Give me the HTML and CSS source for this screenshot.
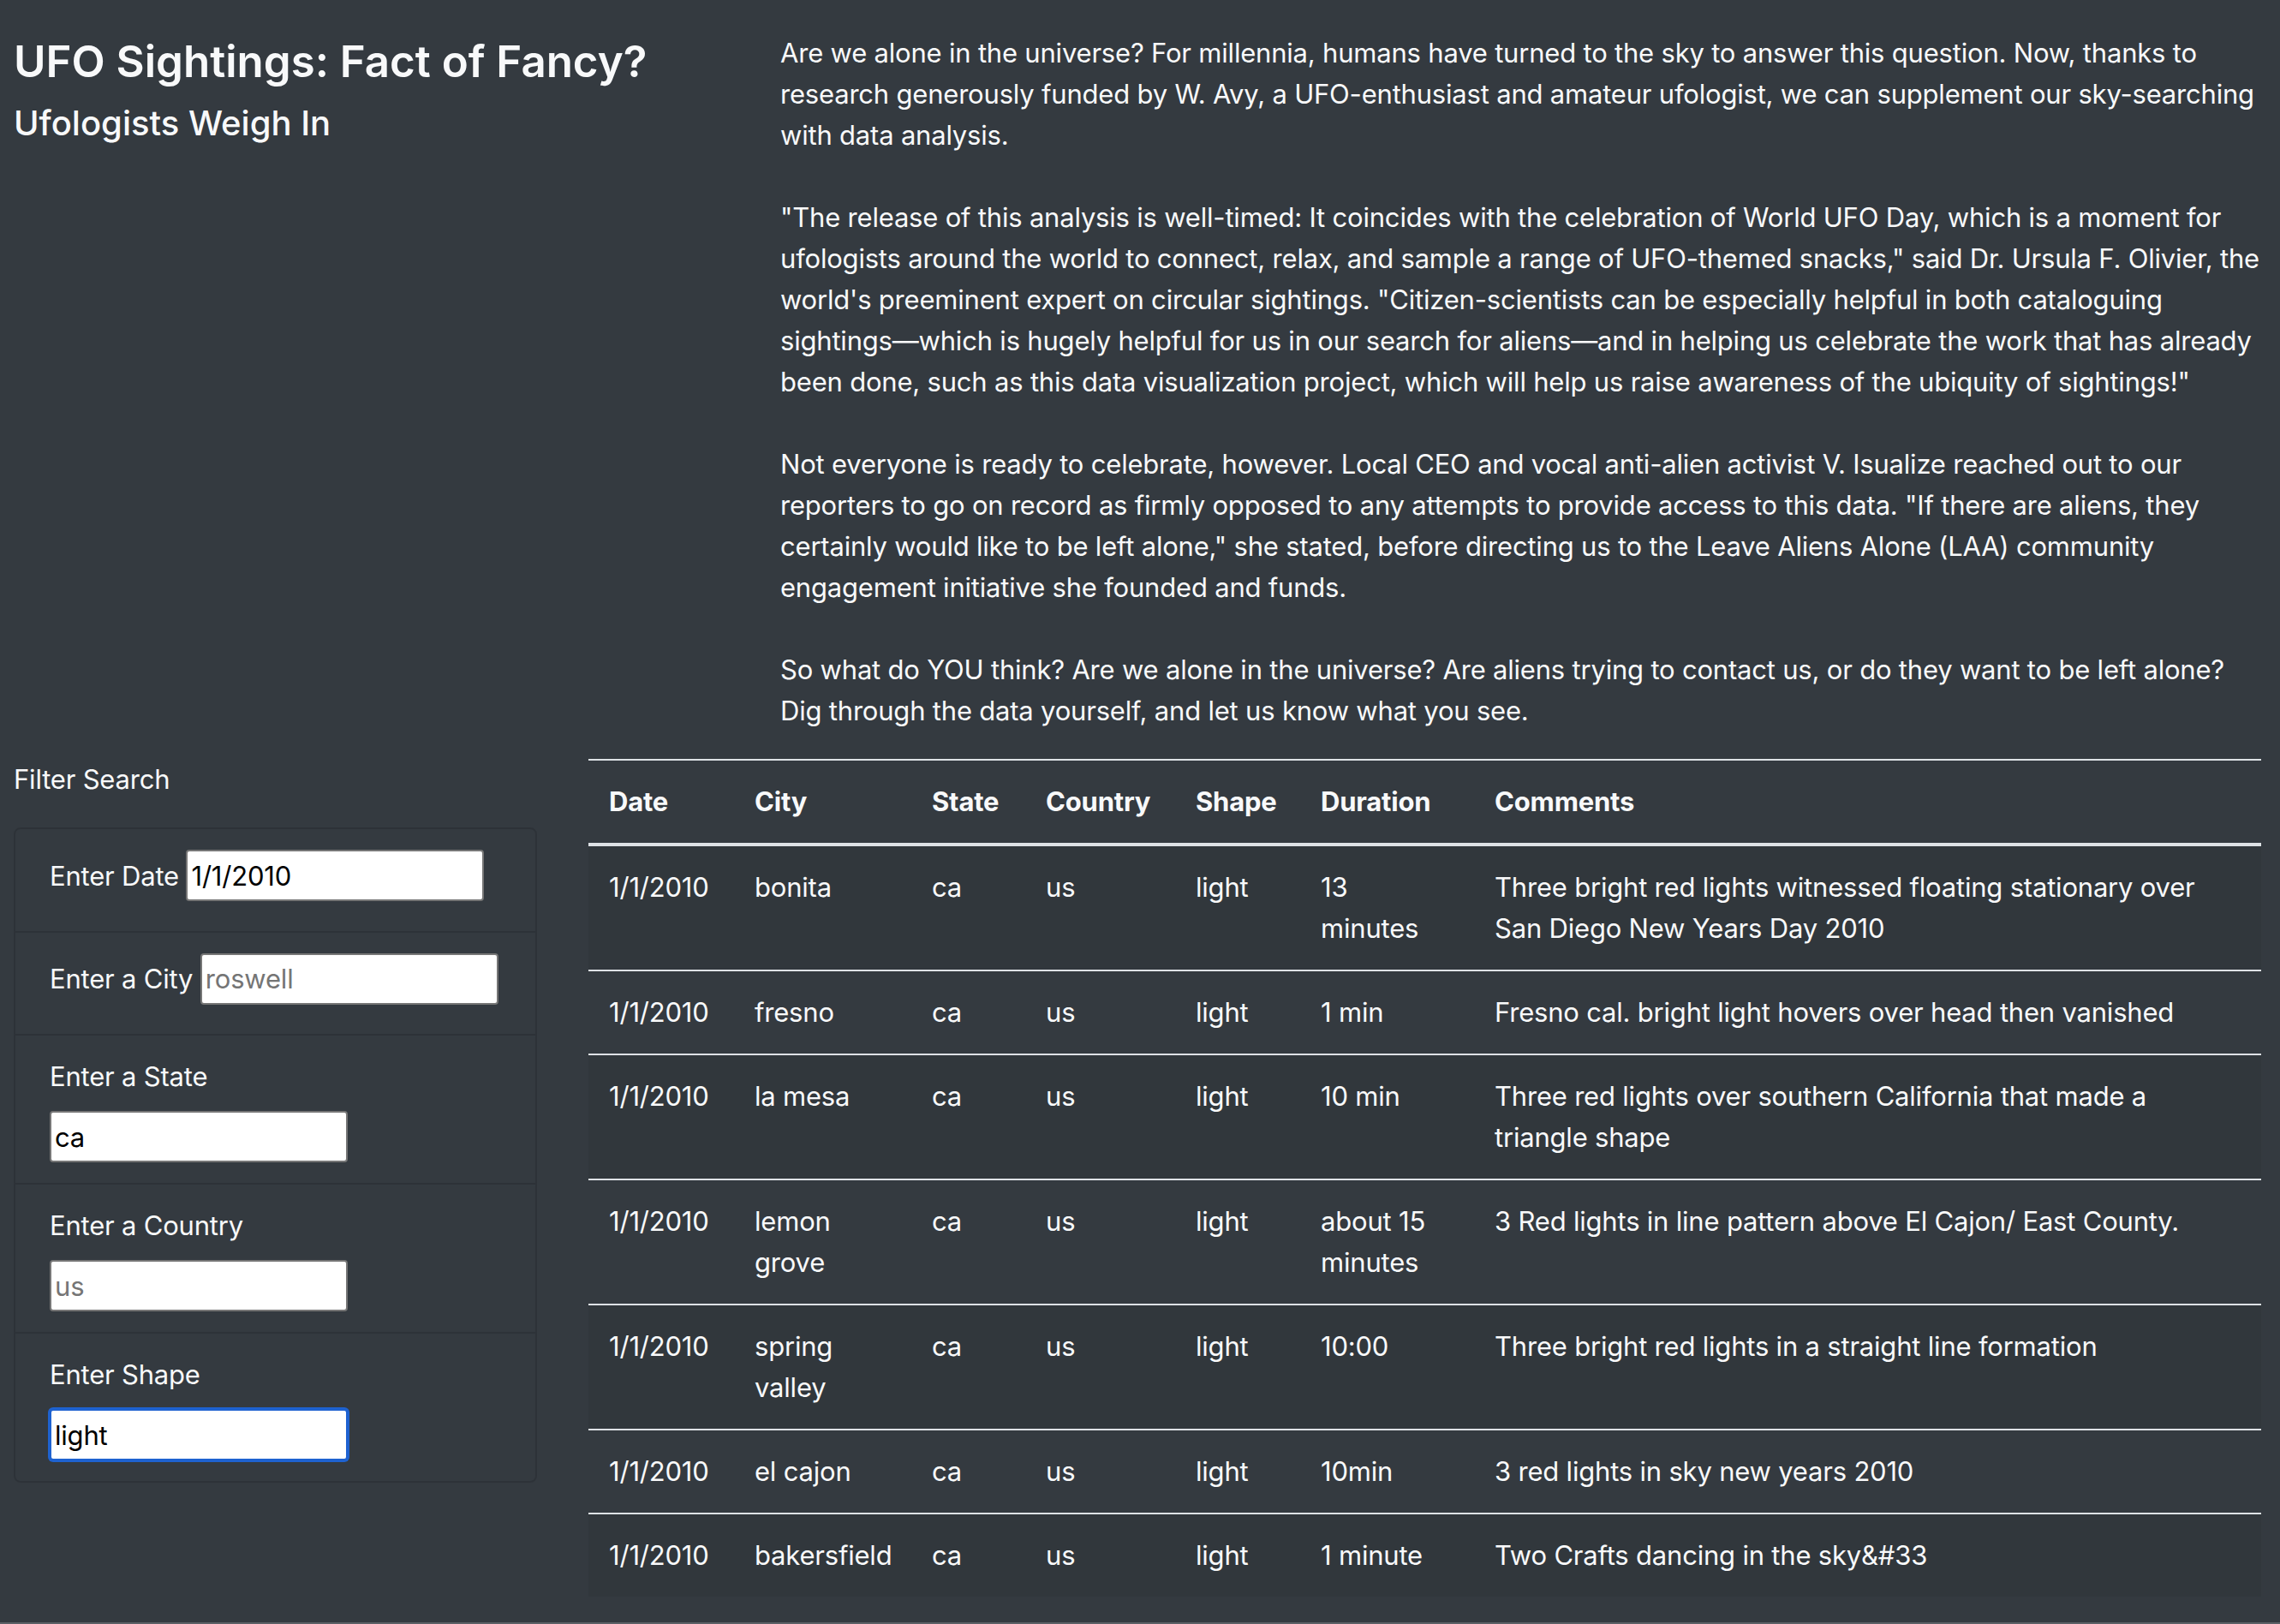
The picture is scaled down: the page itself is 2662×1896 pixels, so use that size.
FILE: index.html
```html
<!DOCTYPE html>
<html lang="en">
<head>
<meta charset="utf-8">
<title>UFO Sightings</title>
<link rel="stylesheet" href="styles.css">
</head>
<body>
<div class="top">
  <header class="heading">
    <h4 class="title">UFO Sightings: Fact of Fancy?</h4>
    <h5 class="subtitle">Ufologists Weigh In</h5>
  </header>
  <div class="article">
    <p class="story">Are we alone in the universe? For millennia, humans have turned to the sky to answer this question. Now, thanks to research generously funded by W. Avy, a UFO-enthusiast and amateur ufologist, we can supplement our sky-searching with data analysis.<br><br>"The release of this analysis is well-timed: It coincides with the celebration of World UFO Day, which is a moment for ufologists around the world to connect, relax, and sample a range of UFO-themed snacks," said Dr. Ursula F. Olivier, the world's preeminent expert on circular sightings. "Citizen-scientists can be especially helpful in both cataloguing sightings—which is hugely helpful for us in our search for aliens—and in helping us celebrate the work that has already been done, such as this data visualization project, which will help us raise awareness of the ubiquity of sightings!"<br><br>Not everyone is ready to celebrate, however. Local CEO and vocal anti-alien activist V. Isualize reached out to our reporters to go on record as firmly opposed to any attempts to provide access to this data. "If there are aliens, they certainly would like to be left alone," she stated, before directing us to the Leave Aliens Alone (LAA) community engagement initiative she founded and funds.<br><br>So what do YOU think? Are we alone in the universe? Are aliens trying to contact us, or do they want to be left alone? Dig through the data yourself, and let us know what you see.</p>
  </div>
</div>
<div class="bottom">
  <form class="filters">
    <p class="filter-title">Filter Search</p>
    <ul class="filter-list">
      <li class="filter-item"><label class="filter-label" for="datetime">Enter Date</label> <input class="filter-input" id="datetime" type="text" value="1/1/2010" placeholder="1/1/2010"></li>
      <li class="filter-item"><label class="filter-label" for="city">Enter a City</label> <input class="filter-input" id="city" type="text" placeholder="roswell"></li>
      <li class="filter-item"><label class="filter-label" for="state">Enter a State</label> <input class="filter-input" id="state" type="text" value="ca" placeholder="ca"></li>
      <li class="filter-item"><label class="filter-label" for="country">Enter a Country</label> <input class="filter-input" id="country" type="text" placeholder="us"></li>
      <li class="filter-item"><label class="filter-label" for="shape">Enter Shape</label> <input class="filter-input is-focused" id="shape" type="text" value="light" placeholder="circle" autofocus></li>
    </ul>
  </form>
  <div class="results">
    <table class="ufo-table">
      <thead>
        <tr>
          <th class="col-date">Date</th>
          <th class="col-city">City</th>
          <th class="col-state">State</th>
          <th class="col-country">Country</th>
          <th class="col-shape">Shape</th>
          <th class="col-duration">Duration</th>
          <th class="col-comments">Comments</th>
        </tr>
      </thead>
      <tbody>
        <tr><td>1/1/2010</td><td>bonita</td><td>ca</td><td>us</td><td>light</td><td class="duration">13 minutes</td><td>Three bright red lights witnessed floating stationary over San Diego New Years Day 2010</td></tr>
        <tr><td>1/1/2010</td><td>fresno</td><td>ca</td><td>us</td><td>light</td><td class="duration">1 min</td><td>Fresno cal. bright light hovers over head then vanished</td></tr>
        <tr><td>1/1/2010</td><td>la mesa</td><td>ca</td><td>us</td><td>light</td><td class="duration">10 min</td><td>Three red lights over southern California that made a triangle shape</td></tr>
        <tr><td>1/1/2010</td><td>lemon grove</td><td>ca</td><td>us</td><td>light</td><td class="duration">about 15 minutes</td><td>3 Red lights in line pattern above El Cajon/ East County.</td></tr>
        <tr><td>1/1/2010</td><td>spring valley</td><td>ca</td><td>us</td><td>light</td><td class="duration">10:00</td><td>Three bright red lights in a straight line formation</td></tr>
        <tr><td>1/1/2010</td><td>el cajon</td><td>ca</td><td>us</td><td>light</td><td class="duration">10min</td><td>3 red lights in sky new years 2010</td></tr>
        <tr><td>1/1/2010</td><td>bakersfield</td><td>ca</td><td>us</td><td>light</td><td class="duration">1 minute</td><td>Two Crafts dancing in the sky&amp;#33</td></tr>
      </tbody>
    </table>
  </div>
</div>
</body>
</html>
```

FILE: styles.css
```css
html {
  background: #5b6066;
}

body {
  margin: 0;
  padding: 38px 22px 0 16px;
  background: #343a40;
  color: #f8f9fa;
  font-family: "Inter", "Noto Sans", "Liberation Sans", sans-serif;
  font-size: 31px;
  line-height: 48px;
  letter-spacing: -0.2px;
}

.top {
  display: grid;
  grid-template-columns: 835px 1fr;
  column-gap: 60px;
}

.title {
  margin: 5px 0 19px;
  font-size: 51px;
  line-height: 57.6px;
  font-weight: 600;
  letter-spacing: 0;
}

.subtitle {
  margin: 0;
  font-size: 40px;
  line-height: 48px;
  font-weight: 500;
  letter-spacing: 0;
}

.story {
  margin: 0 0 32px;
}

.bottom {
  display: grid;
  grid-template-columns: 611px 1fr;
  column-gap: 60px;
  align-items: start;
}

.filter-title {
  margin: 0 0 32px;
}

.filter-list {
  list-style: none;
  margin: 0;
  padding: 0;
  border-radius: 8px;
}

.filter-item {
  padding: 24px 40px;
  border: 2px solid rgba(0, 0, 0, 0.125);
}

.filter-item + .filter-item {
  border-top-width: 0;
}

.filter-item:first-child {
  border-radius: 8px 8px 0 0;
}

.filter-item:last-child {
  border-radius: 0 0 8px 8px;
}

.filter-label {
  display: inline-block;
  margin-bottom: 16px;
}

.filter-input {
  box-sizing: border-box;
  width: 348px;
  height: 60px;
  margin: 0;
  padding: 4px 4px;
  font: inherit;
  line-height: 48px;
  letter-spacing: -0.2px;
  color: #000;
  background: #fff;
  border: 2px solid #767676;
  border-radius: 4px;
  outline: none;
  caret-color: #000;
}

.filter-input::placeholder {
  color: #757575;
}

.filter-input.is-focused {
  border-color: #1e62d0;
  box-shadow: 0 0 0 2px #1e62d0;
}

.ufo-table {
  width: 100%;
  margin-bottom: 30px;
  border-collapse: collapse;
  table-layout: fixed;
  color: #f8f9fa;
}

.ufo-table th,
.ufo-table td {
  padding: 24px;
  text-align: left;
  vertical-align: top;
  border-top: 2px solid #dee2e6;
}

.ufo-table th {
  font-weight: 700;
  vertical-align: bottom;
  border-bottom: 4px solid #dee2e6;
}

.ufo-table td.duration {
  padding-right: 32px;
}

.ufo-table tbody tr:nth-of-type(odd) {
  background: rgba(0, 0, 0, 0.05);
}

.col-date { width: 122px; }
.col-city { width: 159px; }
.col-state { width: 85px; }
.col-country { width: 127px; }
.col-shape { width: 98px; }
.col-duration { width: 155px; }
```
